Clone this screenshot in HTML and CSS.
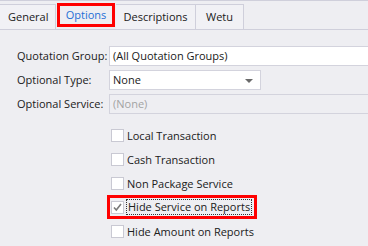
FILE: index.html
```html
<!DOCTYPE html>
<html lang="en">
<head>
  <meta charset="UTF-8">
  <title>Service - Options</title>
  <link rel="stylesheet" href="styles.css">
</head>
<body>
  <div class="tabs">
    <div class="tab">General</div>
    <div class="tab active"><span class="mark">Options</span></div>
    <div class="tab">Descriptions</div>
    <div class="tab">Wetu</div>
  </div>

  <div class="panel">
    <div class="fields">
      <label class="lbl">Quotation Group:</label>
      <div class="edit wide">(All Quotation Groups)</div>

      <label class="lbl">Optional Type:</label>
      <div class="edit combo">None<span class="arrow"></span></div>

      <label class="lbl">Optional Service:</label>
      <div class="edit wide disabled">(None)</div>
    </div>

    <ul class="checks">
      <li><span class="box"></span><span class="txt">Local Transaction</span></li>
      <li><span class="box"></span><span class="txt">Cash Transaction</span></li>
      <li><span class="box"></span><span class="txt">Non Package Service</span></li>
      <li class="hl"><span class="box"><svg width="11" height="11" viewBox="0 0 11 11"><path d="M2 5.5 L4.3 8 L9 2" fill="none" stroke="#7a7a7a" stroke-width="1.6"/></svg></span><span class="txt focus">Hide Service on Reports</span></li>
      <li><span class="box"></span><span class="txt">Hide Amount on Reports</span></li>
    </ul>
  </div>
</body>
</html>
```

FILE: styles.css
```css
body { margin: 0; background: #eeeef2; border-top: 1px solid #cfcfdb; font-family: "Open Sans", "Noto Sans", sans-serif; font-size: 11px; color: #202020; height: 245px; overflow: hidden; }

.tabs { display: flex; height: 25px; margin-top: 3px; border-bottom: 1px solid #cfcfdb; }
.tab { padding: 0 8px 2px; border: 1px solid #cfcfdb; border-bottom: none; border-left: none; display: flex; align-items: center; background: #f1f1f5; }
.tab:first-child { width: 56px; box-sizing: border-box; }
.tab:nth-child(3) { width: 80px; box-sizing: border-box; justify-content: center; }
.tab:nth-child(4) { width: 48px; box-sizing: border-box; justify-content: center; }
.tab.active { background: #eeeef2; width: 60px; box-sizing: border-box; padding: 0; border: none; justify-content: center; color: #1f6fd6; }
.mark { border: 3px solid #f00; width: 52px; height: 17px; box-sizing: content-box; display: flex; align-items: center; justify-content: center; margin-top: -4px; padding-bottom: 1px; }

.panel { padding: 16px 0 0 17px; }
.fields { display: grid; grid-template-columns: 92px 1fr; row-gap: 4px; align-items: center; }
.lbl { line-height: 20px; }
.edit { height: 18px; border: 1px solid #d3d3dd; background: #fff; padding: 0 3px; line-height: 18px; position: relative; }
.wide { margin-right: -1px; }
.combo { width: 144px; }
.disabled { background: #eeeef2; color: #a3a3a3; }
.arrow { position: absolute; right: 7px; top: 8px; border: 4px solid transparent; border-top: 4px solid #6a6a6a; border-bottom: none; }

.checks { list-style: none; margin: 11px 0 0 94px; padding: 0; display: flex; flex-direction: column; align-items: flex-start; }
.checks li { display: flex; align-items: center; height: 20px; margin-bottom: 4px; gap: 3px; white-space: nowrap; }
.box { width: 11px; height: 11px; border: 1px solid #c9c9d3; background: #fff; display: flex; }
.checks li.hl { outline: 3px solid #f00; outline-offset: -1px; margin-left: -2px; padding: 0 3px 0 2px; }
.focus { border: 1px dotted #333; padding: 0 1px; line-height: 14px; margin-left: -1px; }
```
